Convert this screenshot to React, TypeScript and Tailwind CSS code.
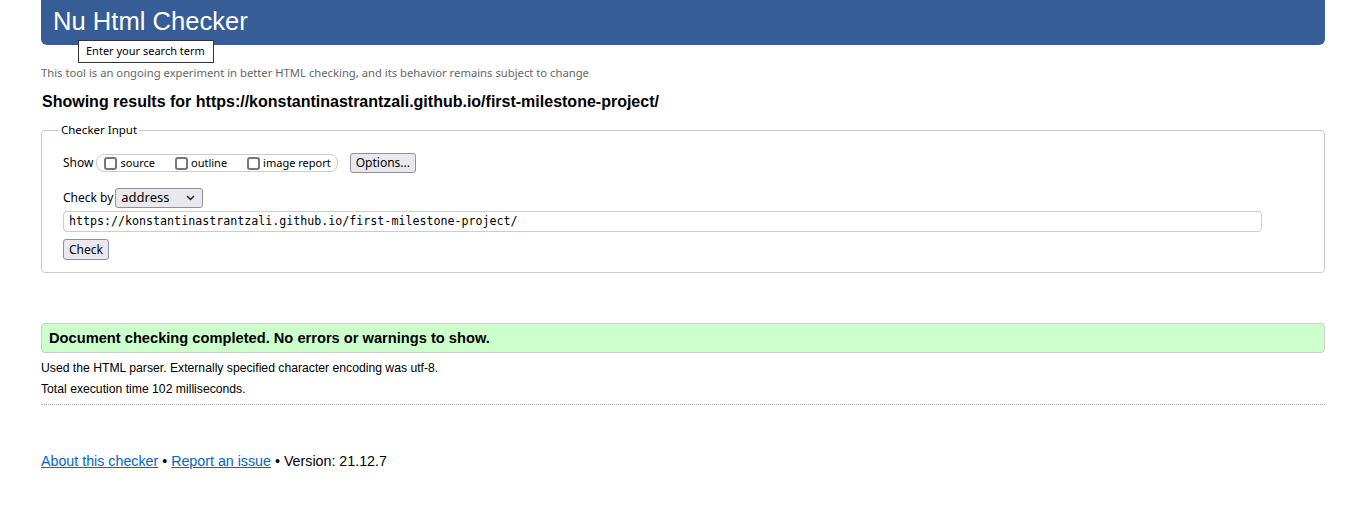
import React from 'react';

const ui = { fontFamily: '"Noto Sans", "Open Sans", sans-serif' };
const arial = { fontFamily: '"Liberation Sans", Arial, sans-serif' };
const mono = { fontFamily: '"DejaVu Sans Mono", "Liberation Mono", monospace' };

const Box: React.FC<{ label: string }> = ({ label }) => (
    <label className="flex items-center gap-[3px]">
        <span className="w-[13px] h-[13px] border-2 border-[#767676] rounded-[3px] bg-white" />
        <span>{label}</span>
    </label>
);

const App: React.FC = () => {
    return (
        <div className="relative min-h-[523px] bg-white text-black" style={arial}>
            <div className="ml-[41px] w-[1284px]">
                {/* Header */}
                <div className="h-[45px] bg-[#365d95] rounded-b-[6px] pl-[12px] flex items-center">
                    <h1 className="text-white text-[25.6px] leading-none -mt-[2px]">Nu Html Checker</h1>
                </div>

                <p className="mt-[20px] text-[11.25px] leading-[16px] text-[#666] whitespace-nowrap" style={ui}>
                    This tool is an ongoing experiment in better HTML checking, and its behavior remains subject to change
                </p>

                <h2 className="mt-[11px] ml-[1px] text-[16px] font-bold leading-[19px]">
                    Showing results for https://konstantinastrantzali.github.io/first-milestone-project/
                </h2>

                {/* Checker input */}
                <fieldset className="mt-[11px] border border-[#ccc] rounded-[4px] pl-[21px] pr-[21px] pb-[12px] text-[12px]" style={ui}>
                    <legend className="-ml-[4px] px-[2px] text-[11.5px] leading-[16px]">Checker Input</legend>
                    <div className="flex items-center mt-[15px] h-[20px]">
                        <span className="mr-[3px]">Show</span>
                        <div className="flex items-center gap-[20px] h-[18px] border border-[#ccc] rounded-[8px] pl-[7px] pr-[6px] text-[11px]">
                            <Box label="source" />
                            <Box label="outline" />
                            <Box label="image report" />
                        </div>
                        <button className="ml-[12px] h-[20px] px-[5px] bg-[#e9e9ed] border border-[#8f8f9d] rounded-[3px] text-[12px] leading-none">
                            Options...
                        </button>
                    </div>
                    <div className="flex items-center mt-[15px] h-[20px]">
                        <span className="mr-[2px]">Check by</span>
                        <div className="relative w-[88px] h-[20px] bg-[#e9e9ed] border border-[#8f8f9d] rounded-[3px] flex items-center pl-[5px] text-[13px]">
                            address
                            <svg className="absolute right-[7px] top-[6px]" width="9" height="6" viewBox="0 0 9 6">
                                <path d="M1 1 L4.5 4.5 L8 1" stroke="#222" strokeWidth="1.5" fill="none" />
                            </svg>
                        </div>
                    </div>
                    <div className="mt-[3px] w-[1199px] h-[21px] border border-[#ccc] rounded-[4px] flex items-center pl-[5px] text-[11.65px]" style={mono}>
                        https://konstantinastrantzali.github.io/first-milestone-project/
                    </div>
                    <button className="mt-[7px] h-[21px] px-[5px] bg-[#e9e9ed] border border-[#8f8f9d] rounded-[3px] text-[12px] leading-none">
                        Check
                    </button>
                </fieldset>

                {/* Result */}
                <div className="mt-[50px] h-[30px] bg-[#ccffcc] border border-[#ccc] rounded-[4px] pl-[7px] flex items-center text-[14.67px] font-bold">
                    Document checking completed. No errors or warnings to show.
                </div>
                <p className="mt-[7px] text-[12.2px] leading-[16px]">
                    Used the HTML parser. Externally specified character encoding was utf-8.
                </p>
                <p className="mt-[5px] text-[12.2px] leading-[16px]">Total execution time 102 milliseconds.</p>
                <div className="mt-[7px] border-b border-dotted border-[#aaa]" />

                <p className="mt-[48px] text-[14.25px] leading-[16px]">
                    <a href="#" className="text-[#0066cc] underline">About this checker</a>
                    {' • '}
                    <a href="#" className="text-[#0066cc] underline">Report an issue</a>
                    {' • Version: 21.12.7'}
                </p>
            </div>

            {/* Tooltip */}
            <div className="absolute left-[78px] top-[40px] w-[136px] h-[23px] border border-[#333] bg-white flex items-center pl-[7px] text-[11px] whitespace-nowrap" style={ui}>
                Enter your search term
            </div>
        </div>
    );
};

export default App;
